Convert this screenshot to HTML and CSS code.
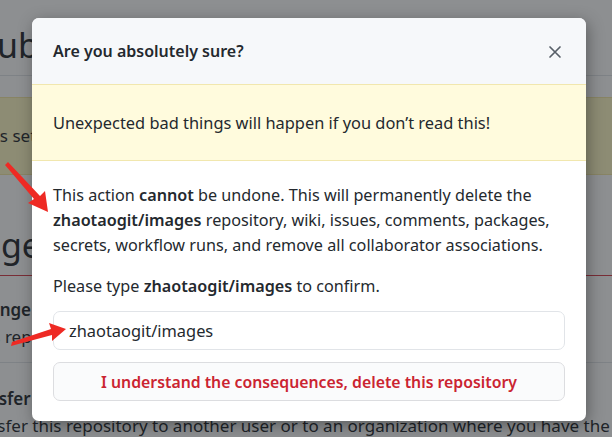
FILE: index.html
```html
<!DOCTYPE html>
<html>
<head>
<meta charset="utf-8">
<link rel="stylesheet" href="styles.css">
</head>
<body>
<div class="page">
  <h1 class="page-title">GitHub Pages</h1>
  <div class="flash">Pages settings have been updated for this repository.</div>
  <h2 class="zone-title">Danger Zone</h2>
  <div class="zone">
    <div class="zone-item">
      <strong>Change repository visibility</strong>
      <p>This repository is currently public.</p>
    </div>
    <div class="zone-item">
      <strong>Transfer ownership</strong>
      <p>Transfer this repository to another user or to an organization where you have the ability to create repositories.</p>
    </div>
  </div>
</div>

<div class="overlay"></div>

<div class="modal">
  <div class="modal-header">
    <h3>Are you absolutely sure?</h3>
    <span class="close">
      <svg width="14" height="14" viewBox="0 0 14 14"><path d="M2 2 L12 12 M12 2 L2 12" stroke="#586069" stroke-width="1.7" stroke-linecap="round" fill="none"/></svg>
    </span>
  </div>
  <div class="modal-warn">Unexpected bad things will happen if you don’t read this!</div>
  <div class="modal-body">
    <p>This action <strong>cannot</strong> be undone. This will permanently delete the <strong>zhaotaogit/images</strong> repository, wiki, issues, comments, packages, secrets, workflow runs, and remove all collaborator associations.</p>
    <p>Please type <strong>zhaotaogit/images</strong> to confirm.</p>
    <div class="input">zhaotaogit/images</div>
    <button class="danger-btn">I understand the consequences, delete this repository</button>
  </div>
</div>

<svg class="arrows" width="612" height="437" viewBox="0 0 612 437">
  <path d="M5 165 L8 162 L40 196 L45 191 L48 212 L28 203 L34 199 Z" fill="#ee2a24"/>
  <path d="M11 346 L12 342 L51 329 L49 323 L66 329 L52 341 L52 335 Z" fill="#ee2a24"/>
</svg>
</body>
</html>
```
FILE: styles.css
```css
html, body {
  margin: 0;
  padding: 0;
}
body {
  width: 612px;
  height: 437px;
  overflow: hidden;
  position: relative;
  background: #ffffff;
  font-family: "Noto Sans", "Open Sans", sans-serif;
  color: #24292e;
}
.page {
  padding-top: 24px;
}
.page-title {
  margin: 0 0 0 -74px;
  font-size: 34px;
  font-weight: 400;
  line-height: 42px;
  padding-bottom: 9px;
  border-bottom: 1px solid #e1e4e8;
  white-space: nowrap;
}
.flash {
  margin-top: 21px;
  height: 76px;
  background: #fff8c5;
  border-top: 1px solid #f5e9a4;
  border-bottom: 1px solid #f5e9a4;
  font-size: 17px;
  line-height: 76px;
  white-space: nowrap;
  text-indent: -40px;
  overflow: hidden;
}
.zone-title {
  margin: 50px 0 0 -64px;
  font-size: 34px;
  font-weight: 400;
  line-height: 40px;
  padding-bottom: 10px;
  white-space: nowrap;
}
.zone {
  border-top: 1px solid #d73a49;
}
.zone-item {
  padding: 20px 0 12px 0;
  margin-left: -32px;
  font-size: 17px;
  line-height: 27px;
  white-space: nowrap;
  border-bottom: 1px solid #e1e4e8;
}
.zone-item + .zone-item {
  border-bottom: 0;
  padding-top: 22px;
  margin-left: -38px;
}
.zone-item strong {
  display: block;
  font-weight: 600;
}
.zone-item p {
  margin: 0;
}
.overlay {
  position: absolute;
  inset: 0;
  background: rgba(27, 31, 35, 0.5);
}
.modal {
  position: absolute;
  left: 32px;
  top: 18px;
  width: 554px;
  height: 403px;
  background: #ffffff;
  border-radius: 7px;
  overflow: hidden;
  box-shadow: 2px 4px 16px rgba(0, 0, 0, 0.35);
}
.modal-header {
  height: 66px;
  background: #f6f8fa;
  display: flex;
  align-items: center;
  justify-content: space-between;
  padding: 0 24px 0 21px;
}
.modal-header h3 {
  margin: 0;
  font-size: 16px;
  font-weight: 600;
}
.close {
  display: flex;
  margin-top: 2px;
}
.modal-warn {
  height: 75px;
  background: #fffbdd;
  border-top: 1px solid #f1e7ae;
  border-bottom: 1px solid #f1e7ae;
  padding: 0 21px;
  display: flex;
  align-items: center;
  font-size: 16.4px;
}
.modal-body {
  padding: 22px 21px 20px 21px;
  font-size: 16.2px;
  line-height: 25px;
}
.modal-body p {
  margin: 0 0 16px 0;
}
.modal-body p + p {
  margin-bottom: 12px;
}
.modal-body strong {
  font-weight: 600;
}
.input {
  height: 37px;
  border: 1px solid #e1e4e8;
  border-radius: 7px;
  padding: 0 15px;
  display: flex;
  align-items: center;
  font-size: 16.4px;
}
.danger-btn {
  margin-top: 12px;
  width: 100%;
  height: 39px;
  border: 1px solid #dcdde0;
  border-radius: 7px;
  background: #fafbfc;
  color: #cb2431;
  font-family: inherit;
  font-size: 15.8px;
  font-weight: 600;
  display: flex;
  align-items: center;
  justify-content: center;
  padding: 0;
}
.arrows {
  position: absolute;
  left: 0;
  top: 0;
  pointer-events: none;
}
```
